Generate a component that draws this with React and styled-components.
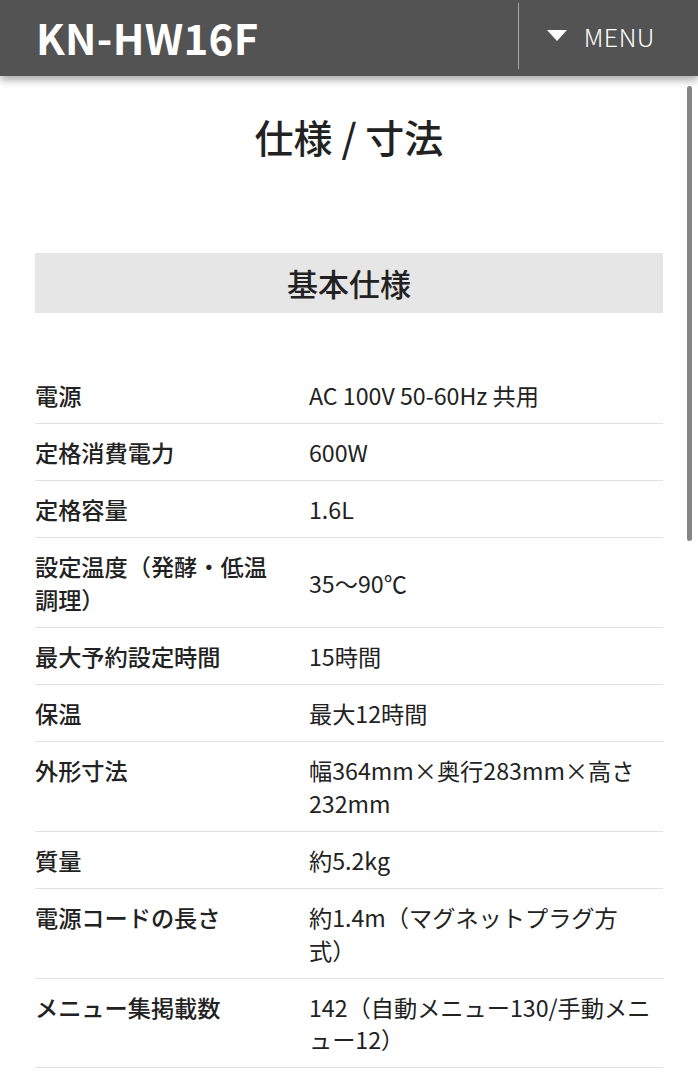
import React from 'react';
import styled, { createGlobalStyle } from 'styled-components';

const GlobalStyle = createGlobalStyle`
  html, body {
    margin: 0;
    padding: 0;
    background: #fff;
  }
  body {
    font-family: "Noto Sans CJK JP", "Noto Sans", sans-serif;
    color: #222;
  }
`;

const specs = [
    { label: '電源', value: 'AC 100V 50-60Hz 共用' },
    { label: '定格消費電力', value: '600W' },
    { label: '定格容量', value: '1.6L' },
    { label: '設定温度（発酵・低温調理）', value: '35〜90℃' },
    { label: '最大予約設定時間', value: '15時間' },
    { label: '保温', value: '最大12時間' },
    { label: '外形寸法', value: '幅364mm×奥行283mm×高さ232mm' },
    { label: '質量', value: '約5.2kg' },
    { label: '電源コードの長さ', value: '約1.4m（マグネットプラグ方式）' },
    { label: 'メニュー集掲載数', value: '142（自動メニュー130/手動メニュー12）' },
];

const App = () => {
    return (
        <React.Fragment>
            <GlobalStyle />
            <Header>
                <Logo>KN-HW16F</Logo>
                <MenuButton>
                    <Arrow viewBox="0 0 20 12">
                        <path d="M0 0 L20 0 L10 11 Z" fill="#fff" />
                    </Arrow>
                    MENU
                </MenuButton>
            </Header>
            <Main>
                <Title>仕様 / 寸法</Title>
                <SectionHead>基本仕様</SectionHead>
                <SpecList>
                    {specs.map((s) => (
                        <SpecRow key={s.label}>
                            <Label>{s.label}</Label>
                            <Value>{s.value}</Value>
                        </SpecRow>
                    ))}
                </SpecList>
            </Main>
            <ScrollThumb />
        </React.Fragment>
    );
};

const Header = styled.header`
    position: relative;
    z-index: 2;
    display: flex;
    align-items: stretch;
    height: 76px;
    padding-left: 36px;
    background: #535353;
    box-shadow: 0 4px 8px rgba(0, 0, 0, 0.35);
`;

const Logo = styled.div`
    flex: 1;
    display: flex;
    align-items: center;
    color: #fff;
    font-size: 42px;
    font-weight: 700;
    letter-spacing: 0.3px;
    padding-bottom: 4px;
`;

const MenuButton = styled.div`
    display: flex;
    align-items: center;
    gap: 17px;
    margin: 3px 0 7px;
    padding: 0 43px 0 28px;
    border-left: 1px solid #a8a8a8;
    color: #fff;
    font-size: 25px;
    font-weight: 300;
    letter-spacing: 0.5px;
`;

const Arrow = styled.svg`
    width: 20px;
    height: 12px;
`;

const Main = styled.main`
    padding: 0 35px 40px;
`;

const Title = styled.h1`
    margin: 33px 0 0;
    line-height: 54px;
    font-size: 39px;
    font-weight: 500;
    text-align: center;
`;

const SectionHead = styled.h2`
    margin: 90px 0 0;
    height: 60px;
    line-height: 60px;
    background: #e6e6e6;
    font-size: 31px;
    font-weight: 500;
    text-align: center;
`;

const SpecList = styled.div`
    margin-top: 54px;
`;

const SpecRow = styled.div`
    display: grid;
    grid-template-columns: 274px 1fr;
    padding: 12px 0 11.5px;
    border-bottom: 1px solid #e0e0e0;
    font-size: 23.2px;
    line-height: 32.6px;
`;

const Label = styled.div`
    align-self: start;
    padding-right: 30px;
    font-weight: 500;
`;

const Value = styled.div`
    align-self: center;
    padding-right: 12px;
    font-weight: 400;
`;

const ScrollThumb = styled.div`
    position: fixed;
    top: 86px;
    right: 6px;
    width: 5px;
    height: 455px;
    border-radius: 3px;
    background: #858585;
    z-index: 3;
`;

export default App;
